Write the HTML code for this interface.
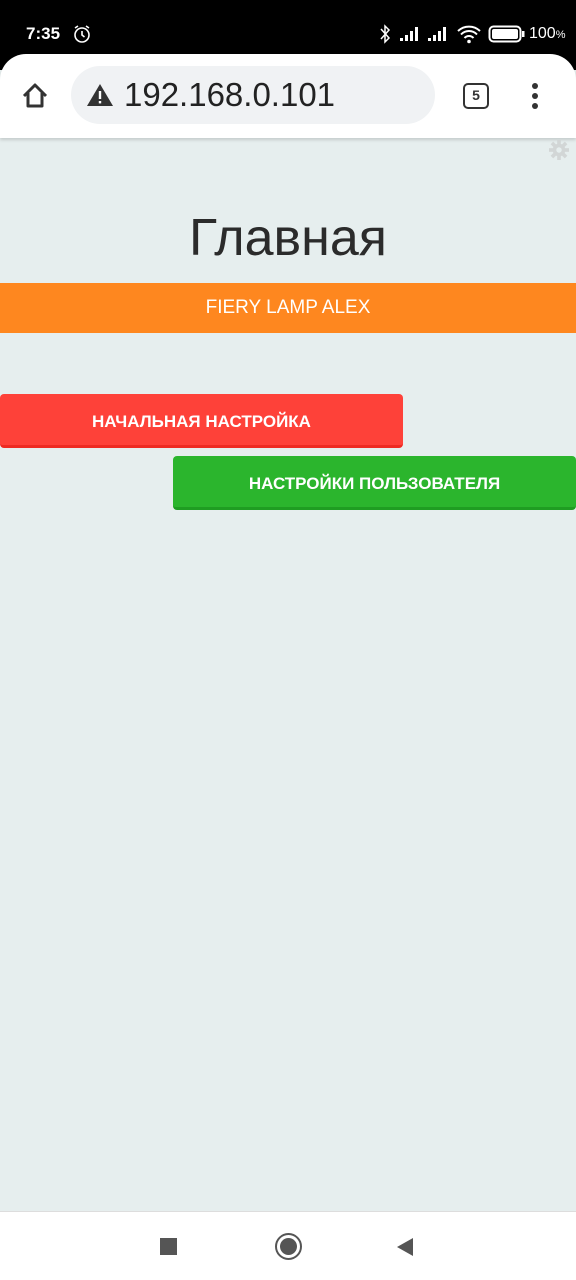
<!DOCTYPE html>
<html><head><meta charset="utf-8"><style>
*{margin:0;padding:0;box-sizing:border-box}
body{width:576px;height:1280px;background:#e6eeee;font-family:"Liberation Sans","DejaVu Sans",sans-serif;position:relative;overflow:hidden}
.sb{position:absolute;top:0;left:0;width:576px;height:70px;background:#000;color:#fff}
.tb{position:absolute;top:54px;left:0;width:576px;height:84px;background:#fff;border-radius:26px 26px 0 0;box-shadow:0 2px 3px rgba(0,0,0,.15)}
.url{position:absolute;left:71px;top:12px;width:364px;height:58px;background:#f0f2f4;border-radius:29px}
.url span{position:absolute;left:53px;top:10px;font-size:33px;color:#222}
.abs{position:absolute}
h1{position:absolute;top:208px;width:576px;text-align:center;font-weight:normal;font-size:52px;color:#2b2b2b}
.band{position:absolute;top:283px;left:0;width:576px;height:50px;background:#fe871f;color:#fff;font-size:19px;text-align:center;line-height:50px}
.btn{position:absolute;color:#fff;font-weight:bold;font-size:17px;text-align:center;line-height:56px;border-radius:4px;height:54px}
.nav{position:absolute;top:1211px;left:0;width:576px;height:69px;background:#fff;border-top:1px solid #ddd}
</style></head><body>
<div class="sb">
<div class="abs" style="left:26px;top:24px;font-size:17px;font-weight:bold">7:35</div>
<svg class="abs" style="left:72px;top:24px" width="20" height="20" viewBox="0 0 20 20"><circle cx="10" cy="11" r="7" fill="none" stroke="#fff" stroke-width="1.6"/><path d="M10 7v4l2.5 2M3 4l3-2M17 4l-3-2" stroke="#fff" stroke-width="1.6" fill="none"/></svg>
<svg class="abs" style="left:379px;top:24px" width="12" height="20" viewBox="0 0 12 20"><path d="M2 5l8 9-4 4V2l4 4-8 9" stroke="#fff" stroke-width="1.5" fill="none"/></svg>
<svg class="abs" style="left:398px;top:26px" width="24" height="16"><rect x="2" y="12" width="3" height="3" fill="#fff"/><rect x="7" y="9" width="3" height="6" fill="#fff"/><rect x="12" y="5" width="3" height="10" fill="#fff"/><rect x="17" y="1" width="3" height="14" fill="#fff"/></svg>
<svg class="abs" style="left:426px;top:26px" width="24" height="16"><rect x="2" y="12" width="3" height="3" fill="#fff"/><rect x="7" y="9" width="3" height="6" fill="#fff"/><rect x="12" y="5" width="3" height="10" fill="#fff"/><rect x="17" y="1" width="3" height="14" fill="#fff"/></svg>
<svg class="abs" style="left:456px;top:24px" width="26" height="20" viewBox="0 0 26 20"><path d="M2 7a16 16 0 0 1 22 0M5 10.5a11 11 0 0 1 16 0M8.5 14a6 6 0 0 1 9 0" stroke="#fff" stroke-width="2" fill="none"/><circle cx="13" cy="17.5" r="1.8" fill="#fff"/></svg>
<svg class="abs" style="left:488px;top:25px" width="38" height="18"><rect x="1.5" y="1.5" width="31" height="15" rx="4" fill="none" stroke="#fff" stroke-width="2"/><rect x="4" y="4" width="26" height="10" rx="2" fill="#fff"/><rect x="34" y="6" width="2.5" height="6" fill="#fff"/></svg>
<div class="abs" style="left:529px;top:25px;font-size:16px">100<span style="font-size:11px">%</span></div>
</div>
<div class="tb">
<svg class="abs" style="left:20px;top:27px" width="30" height="30" viewBox="0 0 30 30"><path d="M4 15L15 4l11 11M8 12v13h14V12" fill="none" stroke="#333" stroke-width="3" stroke-linejoin="round"/></svg>
<div class="url"><svg class="abs" style="left:15px;top:17px" width="28" height="24" viewBox="0 0 28 24"><path d="M14 1L27 23H1z" fill="#333"/><rect x="12.8" y="8" width="2.4" height="8" fill="#fff"/><rect x="12.8" y="18" width="2.4" height="2.4" fill="#fff"/></svg><span>192.168.0.101</span></div>
<div class="abs" style="left:463px;top:29px;width:26px;height:26px;border:2.5px solid #333;border-radius:5px;font-size:14px;font-weight:bold;text-align:center;line-height:21px;color:#333">5</div>
<svg class="abs" style="left:529px;top:28px" width="12" height="28"><circle cx="6" cy="4" r="3" fill="#333"/><circle cx="6" cy="14" r="3" fill="#333"/><circle cx="6" cy="24" r="3" fill="#333"/></svg>
</div>
<svg class="abs" style="left:549px;top:140px" width="20" height="20" viewBox="0 0 22 22"><g fill="#d2d6d6"><circle cx="11" cy="11" r="7"/><rect x="9" y="0" width="4" height="22"/><rect x="0" y="9" width="22" height="4"/><rect x="9" y="0" width="4" height="22" transform="rotate(45 11 11)"/><rect x="9" y="0" width="4" height="22" transform="rotate(-45 11 11)"/></g><circle cx="11" cy="11" r="3" fill="#e6eeee"/></svg>
<h1>Главная</h1>
<div class="band">FIERY LAMP ALEX</div>
<div class="btn" style="left:0;top:394px;width:403px;background:#fe4139;border-bottom:3px solid #ee2a22">НАЧАЛЬНАЯ НАСТРОЙКА</div>
<div class="btn" style="left:173px;top:456px;width:403px;background:#2bb52d;border-bottom:3px solid #1f9d22">НАСТРОЙКИ ПОЛЬЗОВАТЕЛЯ</div>
<div class="nav">
<div class="abs" style="left:160px;top:26px;width:17px;height:17px;background:#555"></div>
<div class="abs" style="left:275px;top:21px;width:27px;height:27px;border:2px solid #555;border-radius:50%"><div style="margin:3px;width:17px;height:17px;border-radius:50%;background:#555"></div></div>
<svg class="abs" style="left:396px;top:25px" width="18" height="20"><path d="M1 10L17 1v18z" fill="#555"/></svg>
</div>
</body></html>
